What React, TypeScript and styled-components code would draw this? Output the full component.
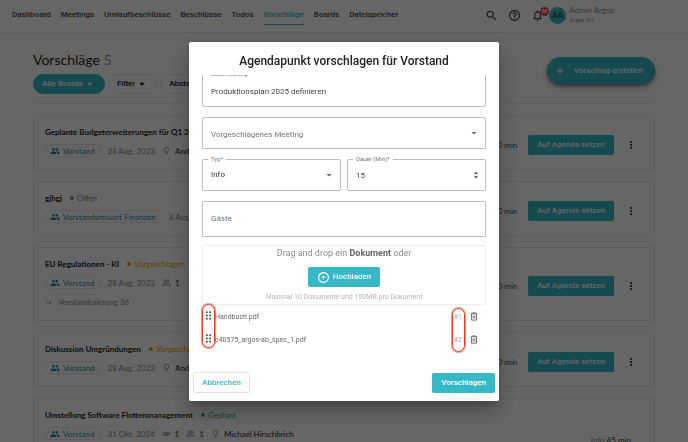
import React from "react";
import styled, { createGlobalStyle, css } from "styled-components";
import {
  MdAdd,
  MdArrowDropDown,
  MdAttachment,
  MdDragIndicator,
  MdHelpOutline,
  MdLightbulbOutline,
  MdMoreVert,
  MdNotificationsNone,
  MdOutlineArrowCircleUp,
  MdOutlinePeopleAlt,
  MdPeople,
  MdSearch,
  MdSubdirectoryArrowRight,
} from "react-icons/md";

const teal = "#36b8c6";
const roboto = 'Roboto, "Liberation Sans", sans-serif';
const lato = 'Lato, "Open Sans", sans-serif';

const GlobalStyle = createGlobalStyle`
  *, *::before, *::after { box-sizing: border-box; }
  body { margin: 0; background: #fff; font-family: ${roboto}; font-size: 8px; line-height: 12px; color: #333; }
  button, input, select, textarea { font: inherit; color: inherit; margin: 0; }
  button { cursor: pointer; }
  h1, h2, h3, p, ul { margin: 0; padding: 0; }
  ul { list-style: none; }
  svg { display: block; flex: none; }
`;

const Page = styled.div`
  height: 100vh;
  overflow: hidden;
`;

/* ---------- Top bar ---------- */

const TopBar = styled.header`
  display: flex;
  align-items: center;
  height: 33px;
  padding: 0 74px 2px 12px;
  border-bottom: 1px solid #eee;
  box-shadow: 0 1px 2px rgba(0, 0, 0, 0.08);
`;

const Nav = styled.nav`
  display: flex;
  gap: 10px;
  flex: 1;
`;

const NavLink = styled.a<{ $active?: boolean }>`
  padding: 4px 0 3px;
  font-weight: 500;
  font-size: 8px;
  text-decoration: none;
  white-space: nowrap;
  color: ${(p) => (p.$active ? teal : "#444")};
  border-bottom: 1px solid ${(p) => (p.$active ? teal : "transparent")};
`;

const Tools = styled.div`
  display: flex;
  align-items: center;
  gap: 10px;
`;

const IconButton = styled.button`
  position: relative;
  padding: 0;
  border: 0;
  background: none;
  color: #333;
`;

const Badge = styled.span`
  position: absolute;
  top: -2px;
  right: -5px;
  width: 9px;
  height: 9px;
  border-radius: 50%;
  background: #f0374d;
  color: #fff;
  font-size: 5px;
  line-height: 9px;
  font-weight: 700;
  text-align: center;
`;

const Account = styled.div`
  display: flex;
  align-items: center;
  gap: 3px;
  margin-left: -5px;
  font-family: ${lato};
  color: #888;
  white-space: nowrap;
`;

const Avatar = styled.span`
  width: 17px;
  height: 17px;
  border-radius: 50%;
  background: ${teal};
  color: #333;
  font-size: 8px;
  line-height: 17px;
  text-align: center;
`;

const AccountText = styled.div`
  font-size: 8px;
  line-height: 9px;
`;

const Company = styled.div`
  font-size: 6px;
`;

/* ---------- Proposal list ---------- */

const Main = styled.main`
  padding: 19px 33px 0;
`;

const ListHeader = styled.div`
  display: flex;
  justify-content: space-between;
  align-items: flex-start;
  padding-bottom: 9px;
  margin-bottom: 11px;
  border-bottom: 1px solid #eee;
`;

const Heading = styled.h1`
  font-family: ${lato};
  font-weight: 400;
  font-size: 14px;
  line-height: 16px;
  color: #222;
  margin-bottom: 6px;
  span {
    color: #999;
  }
`;

const Filters = styled.div`
  display: flex;
  gap: 3px;
`;

const FilterButton = styled.button<{ $active?: boolean }>`
  display: flex;
  align-items: center;
  height: 20px;
  padding: 0 7px 0 8px;
  border-radius: 10px;
  border: 1px solid ${(p) => (p.$active ? teal : "#e6e6e6")};
  background: ${(p) => (p.$active ? teal : "#fff")};
  color: ${(p) => (p.$active ? "#fff" : "#111")};
  font-weight: 500;
  white-space: nowrap;
`;

const CreateButton = styled.button`
  display: flex;
  align-items: center;
  gap: 8px;
  height: 27px;
  margin-top: 5px;
  padding: 0 12px 0 7px;
  border: 0;
  border-radius: 14px;
  background: ${teal};
  color: #fff;
  font-weight: 500;
  box-shadow: 0 2px 3px rgba(0, 0, 0, 0.4), 0 4px 8px rgba(0, 0, 0, 0.2);
`;

const Cards = styled.div`
  display: flex;
  flex-direction: column;
  gap: 11px;
  font-family: ${lato};
`;

const Card = styled.article`
  display: flex;
  align-items: center;
  justify-content: space-between;
  padding: 10px 17px 12px 11px;
  border: 1px solid #eaeaea;
  border-radius: 2px;
`;

const CardInfo = styled.div`
  display: flex;
  flex-direction: column;
  align-self: flex-start;
  gap: 6px;
`;

const TitleRow = styled.div`
  display: flex;
  gap: 8px;
  white-space: nowrap;
`;

const CardTitle = styled.h2`
  font-size: 8px;
  line-height: 12px;
  font-weight: 700;
  color: #222;
`;

const Status = styled.span<{ $color: string }>`
  display: flex;
  align-items: center;
  gap: 3px;
  color: ${(p) => p.$color};
  &::before {
    content: "";
    width: 4px;
    height: 4px;
    border-radius: 50%;
    background: currentColor;
  }
`;

const MetaRow = styled.div`
  display: flex;
  align-items: center;
  gap: 7px;
  color: #888;
  white-space: nowrap;
`;

const Chip = styled.span`
  display: flex;
  align-items: center;
  gap: 3px;
  height: 13px;
  padding: 0 5px 0 4px;
  border: 1px solid #e4e8ea;
  border-radius: 7px;
  color: #1787ab;
`;

const Meta = styled.span`
  display: flex;
  align-items: center;
  gap: 4px;
  b {
    font-weight: 400;
    color: #222;
  }
`;

const Reference = styled.div`
  display: flex;
  align-items: center;
  gap: 5px;
  height: 13px;
  color: #888;
`;

const CardActions = styled.div<{ $plain?: boolean }>`
  display: flex;
  align-items: center;
  gap: 11px;
  padding-top: ${(p) => (p.$plain ? "25px" : "6px")};
  padding-right: ${(p) => (p.$plain ? "6px" : "0")};
  color: #444;
`;

const Duration = styled.span`
  white-space: nowrap;
  span {
    color: #888;
  }
`;

const primary = css`
  border: 0;
  border-radius: 2px;
  background: ${teal};
  color: #fff;
  font-family: ${roboto};
  font-weight: 500;
  white-space: nowrap;
`;

const AgendaButton = styled.button`
  ${primary}
  height: 20px;
  padding: 0 9px;
`;

/* ---------- Dialog ---------- */

const Backdrop = styled.div`
  position: fixed;
  inset: 0;
  display: flex;
  align-items: flex-start;
  justify-content: center;
  padding: 42px 16px 16px;
  background: rgba(0, 0, 0, 0.6);
`;

const Dialog = styled.section`
  width: 100%;
  max-width: 310px;
  border-radius: 2px;
  background: #fff;
  box-shadow: 0 6px 8px -3px rgba(0, 0, 0, 0.2), 0 12px 19px 2px rgba(0, 0, 0, 0.14),
    0 5px 23px 4px rgba(0, 0, 0, 0.12);
`;

const DialogTitle = styled.h2`
  padding: 11px 13px 6px;
  font-size: 12px;
  line-height: 16px;
  font-weight: 500;
  color: #222;
  text-align: center;
`;

const DialogBody = styled.div`
  display: flex;
  flex-direction: column;
  justify-content: flex-end;
  height: 286px;
  overflow: hidden;
  padding: 0 13px 10px;
`;

const Form = styled.form`
  display: flex;
  flex-direction: column;
  gap: 10px;
`;

const Field = styled.div`
  position: relative;
  flex: 1;
  display: flex;
`;

const FieldLabel = styled.label`
  position: absolute;
  top: -4px;
  left: 6px;
  padding: 0 3px;
  background: #fff;
  color: #777;
  font-size: 6px;
  line-height: 8px;
`;

const control = css`
  width: 100%;
  height: 32px;
  padding: 0 8px;
  border: 1px solid #bbb;
  border-radius: 2px;
  background: #fff;
  color: #444;
  outline: none;
  appearance: none;
`;

const TextArea = styled.textarea`
  ${control}
  height: 33px;
  padding: 11px 8px 8px;
  line-height: 12px;
  resize: none;
  overflow: hidden;
`;

const Select = styled.select<{ $muted?: boolean }>`
  ${control}
  padding-top: ${(p) => (p.$muted ? "3px" : "0")};
  color: ${(p) => (p.$muted ? "#777" : "#333")};
`;

const NumberInput = styled.input`
  ${control}
  -moz-appearance: textfield;
  &::-webkit-inner-spin-button {
    display: none;
  }
`;

const GuestInput = styled.input`
  ${control}
  height: 36px;
  padding-bottom: 2px;
  &::placeholder {
    color: #777;
    opacity: 1;
  }
`;

const FieldIcon = styled.span`
  position: absolute;
  right: 6px;
  top: 0;
  bottom: 0;
  display: flex;
  align-items: center;
  color: #666;
  pointer-events: none;
`;

const FieldRow = styled.div`
  display: flex;
  gap: 6px;
`;

const DropZone = styled.div`
  display: flex;
  flex-direction: column;
  align-items: center;
  height: 60px;
  margin-top: -2px;
  border: 1px dotted #ddd;
  border-radius: 2px;
`;

const DropText = styled.p`
  font-size: 9px;
  line-height: 15px;
  color: #8c8c8c;
  b {
    font-weight: 700;
    color: #666;
  }
`;

const UploadButton = styled.button`
  ${primary}
  display: flex;
  align-items: center;
  gap: 3px;
  height: 20px;
  margin: 6px 0 4px;
  padding: 0 9px;
`;

const Hint = styled.p`
  font-size: 7px;
  line-height: 12px;
  color: #b0b6ba;
`;

const FileList = styled.ul`
  position: relative;
  margin-top: -10px;
`;

const FileRow = styled.li`
  display: flex;
  align-items: center;
  height: 23px;
  padding-right: 8px;
  font-size: 7px;
  color: #666;
`;

const DragHandle = styled.span`
  padding: 0 0 3px;
  color: #4a6368;
`;

const FileName = styled.span`
  flex: 1;
`;

const FileNumber = styled.span`
  margin-right: 8px;
  color: #aaa;
`;

const Marker = styled.span<{ $side: "left" | "right" }>`
  position: absolute;
  width: 13px;
  height: 44px;
  border: 1px solid #fa2f16;
  box-shadow: 0 0 0 1px rgba(250, 47, 22, 0.5);
  border-radius: 7px;
  ${(p) => (p.$side === "left" ? "left: 0; top: -1px;" : "right: 21px; top: 3px;")}
`;

const DialogFooter = styled.footer`
  display: flex;
  justify-content: space-between;
  align-items: center;
  padding: 11px 4px 8px;
`;

const CancelButton = styled.button`
  height: 21px;
  padding: 0 8px;
  border: 1px solid #e2e2e2;
  border-radius: 2px;
  background: #fff;
  color: ${teal};
  font-weight: 500;
`;

const SubmitButton = styled.button`
  ${primary}
  height: 20px;
  padding: 0 9px;
`;

const TrashIcon = () => (
  <svg width="8" height="9" viewBox="0 0 16 18" fill="none" stroke="#555" strokeWidth="1.6">
    <path d="M1.5 3.5h13M5.5 3.5v-2h5v2M3 3.5v12.7h10V3.5M6.3 6.5v6.7M9.7 6.5v6.7" />
  </svg>
);

const StepperIcon = () => (
  <svg width="8" height="10" viewBox="0 0 8 10">
    <rect x="1" y="1" width="6" height="8" rx="3" fill="#eee" />
    <path d="M2.2 4 4 1.8 5.8 4zM2.2 6 4 8.2 5.8 6z" fill="#555" />
  </svg>
);

type Proposal = {
  title: string;
  status?: [string, string];
  board: string;
  date: string;
  files?: number;
  people?: number;
  person?: string;
  reference?: string;
  minutes: string;
  planned?: boolean;
};

const orange = "#ff9500";

const proposals: Proposal[] = [
  { title: "Geplante Budgeterweiterungen für Q1 2024", board: "Vorstand", date: "28 Aug. 2023", person: "Andreas", minutes: "30 min" },
  { title: "gjhgj", status: ["Offen", "#888"], board: "Vorstandsressort Finanzen", date: "8 Aug. 2023", minutes: "30 min" },
  { title: "EU Regulationen - KI", status: ["Vorgeschlagen", orange], board: "Vorstand", date: "28 Aug. 2023", people: 1, person: "Andreas", reference: "Vorstandssitzung 36", minutes: "30 min" },
  { title: "Diskussion Umgründungen", status: ["Vorgeschlagen", orange], board: "Vorstand", date: "28 Aug. 2023", person: "Andreas", minutes: "30 min" },
  { title: "Umstellung Software Flottenmanagement", status: ["Geplant", "#1fae7e"], board: "Vorstand", date: "31 Okt. 2024", files: 1, people: 1, person: "Michael Hirschbrich", minutes: "45 min", planned: true },
];

const navItems = ["Dashboard", "Meetings", "Umlaufbeschlüsse", "Beschlüsse", "Todos", "Vorschläge", "Boards", "Dateispeicher"];
const files = ["Handbuch.pdf", "c40575_argos-ab_spec_1.pdf"];

const ProposalCard = ({ item }: { item: Proposal }) => (
  <Card>
    <CardInfo>
      <TitleRow>
        <CardTitle>{item.title}</CardTitle>
        {item.status && <Status $color={item.status[1]}>{item.status[0]}</Status>}
      </TitleRow>
      <MetaRow>
        <Chip>
          <MdPeople size={10} />
          {item.board}
        </Chip>
        <span>{item.date}</span>
        {item.files && <Meta><MdAttachment size={9} /><b>{item.files}</b></Meta>}
        {item.people && <Meta><MdOutlinePeopleAlt size={9} /><b>{item.people}</b></Meta>}
        {item.person && <Meta><MdLightbulbOutline size={9} /><b>{item.person}</b></Meta>}
      </MetaRow>
      {item.reference && (
        <Reference>
          <MdSubdirectoryArrowRight size={8} />
          {item.reference}
        </Reference>
      )}
    </CardInfo>
    <CardActions $plain={item.planned}>
      <Duration>{item.planned && <span>Info </span>}{item.minutes}</Duration>
      {!item.planned && (
        <>
          <AgendaButton type="button">Auf Agenda setzen</AgendaButton>
          <IconButton type="button" aria-label="Mehr"><MdMoreVert size={12} /></IconButton>
        </>
      )}
    </CardActions>
  </Card>
);

export default function App() {
  return (
    <>
      <GlobalStyle />
      <Page>
        <TopBar>
          <Nav>
            {navItems.map((name) => (
              <NavLink key={name} href="#" $active={name === "Vorschläge"}>{name}</NavLink>
            ))}
          </Nav>
          <Tools>
            <IconButton type="button" aria-label="Suche"><MdSearch size={13} /></IconButton>
            <IconButton type="button" aria-label="Hilfe"><MdHelpOutline size={13} /></IconButton>
            <IconButton type="button" aria-label="Benachrichtigungen">
              <MdNotificationsNone size={13} />
              <Badge>58</Badge>
            </IconButton>
            <Account>
              <Avatar>AA</Avatar>
              <AccountText>
                Admin Argos
                <Company>Argos AG</Company>
              </AccountText>
            </Account>
          </Tools>
        </TopBar>
        <Main>
          <ListHeader>
            <div>
              <Heading>Vorschläge <span>5</span></Heading>
              <Filters>
                <FilterButton type="button" $active>Alle Boards <MdArrowDropDown size={14} /></FilterButton>
                <FilterButton type="button">Filter <MdArrowDropDown size={14} /></FilterButton>
                <FilterButton type="button">Absteigend <MdArrowDropDown size={14} /></FilterButton>
              </Filters>
            </div>
            <CreateButton type="button"><MdAdd size={12} />Vorschlag erstellen</CreateButton>
          </ListHeader>
          <Cards>
            {proposals.map((item) => <ProposalCard key={item.title} item={item} />)}
          </Cards>
        </Main>
      </Page>
      <Backdrop>
        <Dialog role="dialog" aria-modal="true" aria-labelledby="dialog-title">
          <DialogTitle id="dialog-title">Agendapunkt vorschlagen für Vorstand</DialogTitle>
          <DialogBody>
            <Form id="proposal">
              <Field>
                <TextArea id="description" defaultValue="Produktionsplan 2025 definieren" />
                <FieldLabel htmlFor="description">Beschreibung</FieldLabel>
              </Field>
              <Field>
                <Select $muted aria-label="Vorgeschlagenes Meeting">
                  <option>Vorgeschlagenes Meeting</option>
                </Select>
                <FieldIcon><MdArrowDropDown size={12} /></FieldIcon>
              </Field>
              <FieldRow>
                <Field>
                  <Select id="type"><option>Info</option></Select>
                  <FieldLabel htmlFor="type">Typ*</FieldLabel>
                  <FieldIcon><MdArrowDropDown size={12} /></FieldIcon>
                </Field>
                <Field>
                  <NumberInput id="duration" type="number" defaultValue={15} />
                  <FieldLabel htmlFor="duration">Dauer (Min)*</FieldLabel>
                  <FieldIcon><StepperIcon /></FieldIcon>
                </Field>
              </FieldRow>
              <Field>
                <GuestInput aria-label="Gäste" placeholder="Gäste" />
              </Field>
              <DropZone>
                <DropText>Drag and drop ein <b>Dokument</b> oder</DropText>
                <UploadButton type="button"><MdOutlineArrowCircleUp size={13} />Hochladen</UploadButton>
                <Hint>Maximal 10 Dokumente und 100MB pro Dokument</Hint>
              </DropZone>
              <FileList>
                {files.map((name, index) => (
                  <FileRow key={name}>
                    <DragHandle><MdDragIndicator size={13} /></DragHandle>
                    <FileName>{name}</FileName>
                    <FileNumber>#{index + 1}</FileNumber>
                    <IconButton type="button" aria-label={`${name} löschen`}><TrashIcon /></IconButton>
                  </FileRow>
                ))}
                <Marker $side="left" />
                <Marker $side="right" />
              </FileList>
            </Form>
          </DialogBody>
          <DialogFooter>
            <CancelButton type="button">Abbrechen</CancelButton>
            <SubmitButton type="submit" form="proposal">Vorschlagen</SubmitButton>
          </DialogFooter>
        </Dialog>
      </Backdrop>
    </>
  );
}
